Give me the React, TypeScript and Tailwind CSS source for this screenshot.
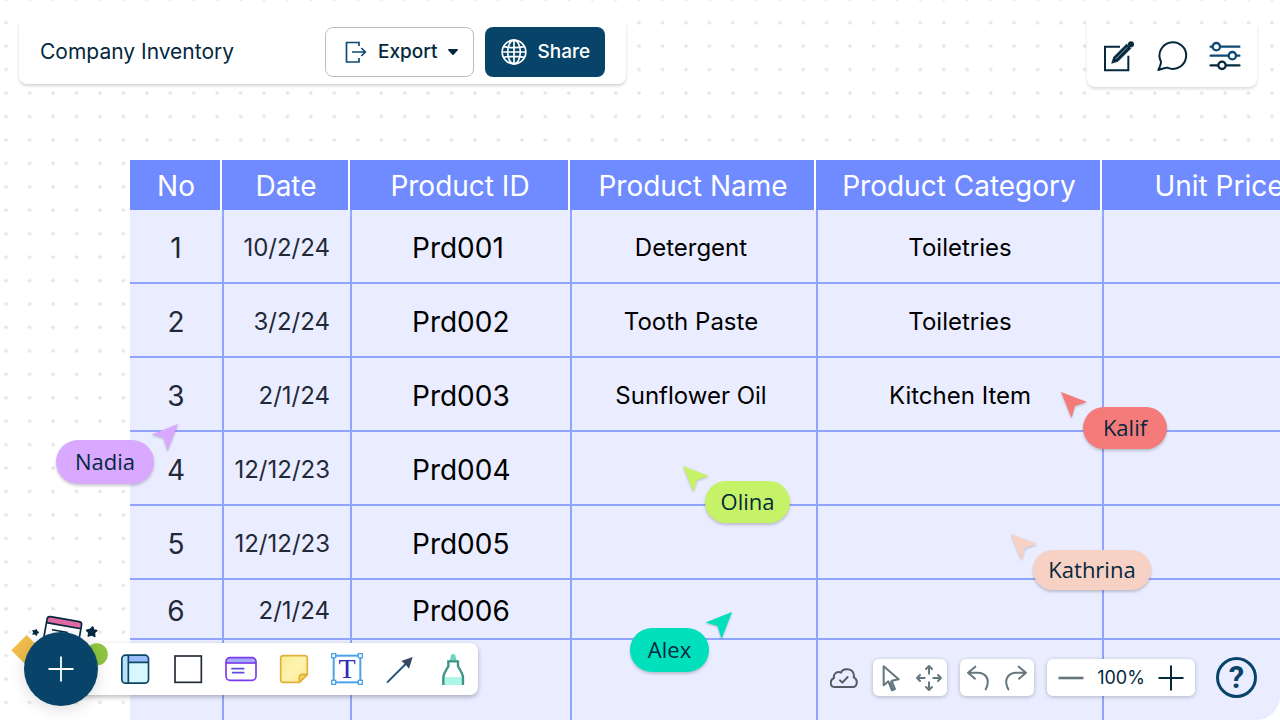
import type { ReactNode } from "react";

type Row = { no: string; date: string; id: string; name: string; category: string };

const rows: Row[] = [
  { no: "1", date: "10/2/24", id: "Prd001", name: "Detergent", category: "Toiletries" },
  { no: "2", date: "3/2/24", id: "Prd002", name: "Tooth Paste", category: "Toiletries" },
  { no: "3", date: "2/1/24", id: "Prd003", name: "Sunflower Oil", category: "Kitchen Item" },
  { no: "4", date: "12/12/23", id: "Prd004", name: "", category: "" },
  { no: "5", date: "12/12/23", id: "Prd005", name: "", category: "" },
  { no: "6", date: "2/1/24", id: "Prd006", name: "", category: "" },
  { no: "", date: "", id: "", name: "", category: "" },
];

const rowHeights = ["h-[74px]", "h-[74px]", "h-[74px]", "h-[74px]", "h-[74px]", "h-[60px]", "h-20"];

const headings = ["No", "Date", "Product ID", "Product Name", "Product Category", "Unit Price"];

function DotGrid() {
  return (
    <svg className="absolute inset-0 h-full w-full" aria-hidden="true">
      <defs>
        <pattern id="dots" x="-5.5" y="-12.5" width="23.44" height="23.44" patternUnits="userSpaceOnUse">
          <circle cx="11.72" cy="11.72" r="1.8" fill="#e4e4e4" />
        </pattern>
      </defs>
      <rect width="100%" height="100%" fill="url(#dots)" />
    </svg>
  );
}

function IconButton({ label, className, children }: { label: string; className: string; children: ReactNode }) {
  return (
    <button type="button" aria-label={label} className={className}>
      {children}
    </button>
  );
}

function Icon({ children }: { children: ReactNode }) {
  return (
    <svg viewBox="0 0 108 108" className="size-9" fill="none" aria-hidden="true">
      {children}
    </svg>
  );
}

function SmallIcon({ children }: { children: ReactNode }) {
  return (
    <svg
      viewBox="0 0 84 84"
      className="size-7"
      fill="none"
      stroke="#64777f"
      strokeWidth="6"
      strokeLinecap="round"
      strokeLinejoin="round"
      aria-hidden="true"
    >
      {children}
    </svg>
  );
}

function Header() {
  return (
    <header className="relative flex items-start justify-between pr-[23px] pl-[19px] pt-[21px]">
      <div className="flex items-center gap-[91px] rounded-b-lg bg-white px-[21px] pt-[6px] pb-[7px] shadow-[0_2px_3px_rgba(0,0,0,0.17)]">
        <h1 className="text-[21px] leading-7 text-[#04283d]">Company Inventory</h1>
        <div className="flex gap-[11px]">
          <button
            type="button"
            className="flex h-[50px] items-center rounded-lg border border-[#b4c0c6] pl-[18px] pr-[15px] text-[19px] font-medium text-[#04283d]"
          >
            <svg viewBox="0 0 72 72" className="mr-[10px] size-6" fill="none" stroke="#0c4a74" strokeWidth="5" aria-hidden="true">
              <path d="M45 18V7.500H7.500V66H45V54" />
              <path d="M24 36H64M52 24L64 36L52 48" />
            </svg>
            Export
            <svg viewBox="0 0 30 18" className="ml-[11px] h-[6px] w-[10px]" aria-hidden="true">
              <path d="M2 0H28Q31 1 29 4L17 17Q15 19 13 17L1 4Q-1 1 2 0Z" fill="#04283d" />
            </svg>
          </button>
          <button
            type="button"
            className="flex h-[50px] items-center gap-[10px] rounded-lg bg-[#084469] pl-4 pr-[15px] text-[19px] font-medium text-white"
          >
            <svg viewBox="0 0 78 78" className="size-[26px]" fill="none" stroke="#fff" strokeWidth="5" aria-hidden="true">
              <circle cx="39" cy="39" r="35.500" />
              <ellipse cx="39" cy="39" rx="19" ry="35.500" />
              <path d="M39 3V75M3 39H75M8 23Q39 29 70 23M8 55Q39 49 70 55" />
            </svg>
            Share
          </button>
        </div>
      </div>

      <div className="mt-[3px] flex gap-[17px] rounded-b-lg bg-white px-[14px] pt-[14px] pb-[13px] shadow-[0_2px_3px_rgba(0,0,0,0.14)]">
        <IconButton label="Edit" className="size-9">
          <Icon>
            <path d="M57 26.500H12V97H82V53" stroke="#04283d" strokeWidth="6" />
            <path d="M32 76L38 57L78 17L91 30L51 70Z" fill="#04283d" stroke="#04283d" strokeWidth="2" strokeLinejoin="round" />
            <path d="M44 63L79 28" stroke="#b9c6ce" strokeWidth="2.500" />
            <path d="M76 15L93 32" stroke="#fff" strokeWidth="2.500" />
            <circle cx="90" cy="18.500" r="9" fill="#04283d" />
          </Icon>
        </IconButton>
        <IconButton label="Comments" className="size-9">
          <Icon>
            <path
              d="M21 71A40 40 0 1 1 40 89C32 88 22 93 13 96C17 86 22 80 21 71Z"
              stroke="#04283d"
              strokeWidth="6"
              strokeLinejoin="round"
            />
          </Icon>
        </IconButton>
        <IconButton label="Settings" className="size-9">
          <Icon>
            <g strokeWidth="7" strokeLinecap="round" fill="#fff">
              <g stroke="#0c4a74">
                <path d="M11 26H97M11 53H97" />
                <circle cx="28" cy="26" r="11" />
                <circle cx="76" cy="53" r="11" />
              </g>
              <g stroke="#04283d">
                <path d="M11 82H97" />
                <circle cx="45" cy="82" r="11" />
              </g>
            </g>
          </Icon>
        </IconButton>
      </div>
    </header>
  );
}

function InventoryTable() {
  return (
    <section className="relative mt-[73px] overflow-hidden rounded-br-3xl pl-[130px]">
      <table className="w-[1206px] table-fixed border-separate border-spacing-0 bg-[#eaedff] text-center text-[24px] leading-8 text-black">
        <colgroup>
          <col className="w-[92px]" />
          <col className="w-[128px]" />
          <col className="w-[220px]" />
          <col className="w-[246px]" />
          <col className="w-[286px]" />
          <col />
        </colgroup>
        <thead>
          <tr className="h-[50px] bg-[#708bff]">
            {headings.map((heading) => (
              <th
                key={heading}
                scope="col"
                className="whitespace-nowrap border-r-2 border-white p-0 pt-px pl-[2px] text-[28px] font-normal text-white"
              >
                {heading}
              </th>
            ))}
          </tr>
        </thead>
        <tbody>
          {rows.map((row, i) => {
            const line = i === rows.length - 1 ? "border-[#8fa5ff]" : "border-b-2 border-[#8fa5ff]";
            return (
              <tr key={i} className={rowHeights[i]}>
                <td className={`${line} p-0 pt-1 text-[28px] text-[#1f2937]`}>{row.no}</td>
                <td className={`${line} border-l-2 p-0 pt-1 pr-5 text-right text-[#1f2937]`}>{row.date}</td>
                <td className={`${line} border-l-2 p-0 pt-1 pl-[60px] text-left text-[28px]`}>{row.id}</td>
                <td className={`${line} border-l-2 p-0 pt-1 pr-[6px]`}>{row.name}</td>
                <td className={`${line} border-l-2 p-0 pt-1`}>{row.category}</td>
                <td className={`${line} border-l-2 p-0`}></td>
              </tr>
            );
          })}
        </tbody>
      </table>
    </section>
  );
}

function Cursor({ place, color, flip }: { place: string; color: string; flip?: boolean }) {
  return (
    <svg viewBox="0 0 28 30" className={`absolute h-[30px] w-7 drop-shadow-[0_1px_1px_rgba(0,0,0,0.22)] ${place}`} aria-hidden="true">
      <path
        d={flip ? "M27 1L0.500 11.500L12.500 15L16.500 28Z" : "M1 1L27 11L15 15L11.500 27Z"}
        fill={color}
      />
    </svg>
  );
}

function Tag({ className, children }: { className: string; children: ReactNode }) {
  return (
    <span
      className={`absolute flex items-center justify-center rounded-full pb-[2px] font-['Open_Sans','Noto_Sans',sans-serif] text-[22px] leading-7 text-[#04283d] shadow-[0_2px_3px_rgba(0,0,0,0.2)] ${className}`}
    >
      {children}
    </span>
  );
}

function Collaborators() {
  return (
    <>
      <Cursor place="left-[151px] top-[423px]" color="#d9a8ff" flip />
      <Tag className="left-[56px] top-[440px] h-11 w-[98px] bg-[#d9a8ff]">Nadia</Tag>
      <Cursor place="left-[682px] top-[465px]" color="#c6f267" />
      <Tag className="left-[705px] top-[481px] h-[42px] w-[85px] bg-[#c6f267]">Olina</Tag>
      <Cursor place="left-[1060px] top-[391px]" color="#f57a7a" />
      <Tag className="left-[1083px] top-[407px] h-[42px] w-[84px] bg-[#f57a7a]">Kalif</Tag>
      <Cursor place="left-[1010px] top-[533px]" color="#f8d1c5" />
      <Tag className="left-[1033px] top-[550px] h-10 w-[118px] bg-[#f8d1c5]">Kathrina</Tag>
      <Cursor place="left-[705px] top-[611px]" color="#00e0bc" flip />
      <Tag className="left-[630px] top-[628px] h-11 w-[79px] bg-[#00e0bc]">Alex</Tag>
    </>
  );
}

function AddButton() {
  return (
    <div className="relative z-10">
      <svg viewBox="30 39 300 165" className="absolute -left-[14px] -top-[19px] h-[55px] w-[100px]" aria-hidden="true">
        <path d="M34 151L80 105L126 151L80 197Z" fill="#f0bd4b" />
        <circle cx="290" cy="163" r="33.500" fill="#8fc640" />
        <g transform="rotate(10 190 80)" strokeLinejoin="round">
          <rect x="138" y="57" width="105" height="90" rx="9" fill="#fff" />
          <path d="M138 77V66Q138 57 147 57H234Q243 57 243 66V77Z" fill="#e06aa6" />
          <rect x="138" y="57" width="105" height="90" rx="9" fill="none" stroke="#04283d" strokeWidth="5" />
          <path d="M138 77H243M158 95H206" stroke="#04283d" strokeWidth="5" />
        </g>
        <g fill="#04283d" stroke="#04283d" strokeLinejoin="round">
          <path strokeWidth="5" d="M278 81L281 90L290 92L283 98L284 109L275 104L265 108L267 98L260 91L270 89Z" />
          <path strokeWidth="4" d="M109 89L110 94L115 97L110 100L109 105L105 101L99 102L102 97L99 92L105 93Z" />
        </g>
      </svg>
      <button
        type="button"
        aria-label="Add"
        className="relative flex size-[74px] items-center justify-center rounded-full bg-[#084469] shadow-[0_3px_16px_rgba(0,0,0,0.14)]"
      >
        <svg viewBox="0 0 26 26" className="size-[26px]" stroke="#fff" strokeWidth="1.800" aria-hidden="true">
          <path d="M0.500 13H25.500M13 0.500V25.500" />
        </svg>
      </button>
    </div>
  );
}

function ShapeToolbar() {
  return (
    <nav
      aria-label="Shapes"
      className="-ml-9 flex h-[52px] items-center gap-[17px] rounded-lg bg-white pl-[55px] pr-[7px] shadow-[0_2px_5px_rgba(0,0,0,0.28)]"
    >
      <IconButton label="Table" className="size-9">
        <Icon>
          <rect x="14.500" y="12.500" width="80" height="84" rx="11" fill="#d6f7fd" />
          <path d="M34 12.500V96.500H25.500Q14.500 96.500 14.500 85.500V23.500Q14.500 12.500 25.500 12.500Z" fill="#b9e0f9" />
          <path d="M34 12.500H83.500Q94.500 12.500 94.500 23.500V34H34Z" fill="#98bdfa" />
          <rect x="14.500" y="12.500" width="80" height="84" rx="11" stroke="#0c4566" strokeWidth="5" />
          <path d="M34 12V97M34 34H94" stroke="#0c4566" strokeWidth="5" />
        </Icon>
      </IconButton>
      <IconButton label="Rectangle" className="size-9">
        <Icon>
          <rect x="15" y="15" width="79" height="79" stroke="#1f2937" strokeWidth="5" />
        </Icon>
      </IconButton>
      <IconButton label="Card" className="size-9">
        <Icon>
          <path d="M9 36V32Q9 20 21 20H87Q99 20 99 32V36Z" fill="#a3adf7" />
          <rect x="9" y="20" width="90" height="68" rx="12" stroke="#7c3aed" strokeWidth="5" />
          <path d="M9 36H99" stroke="#7c3aed" strokeWidth="5" />
          <path d="M27 53H62M29 65H62" stroke="#5b4be0" strokeWidth="5" strokeLinecap="round" />
        </Icon>
      </IconButton>
      <IconButton label="Sticky note" className="size-9">
        <Icon>
          <defs>
            <linearGradient id="note" x1="0" y1="0" x2="1" y2="1">
              <stop offset="0" stopColor="#fbec96" />
              <stop offset="0.5" stopColor="#fdf3ae" />
              <stop offset="1" stopColor="#fbe98c" />
            </linearGradient>
          </defs>
          <path
            d="M22 14H86Q94 14 94 22V70L70 94H22Q14 94 14 86V22Q14 14 22 14Z"
            fill="url(#note)"
            stroke="#e0b03c"
            strokeWidth="5"
            strokeLinejoin="round"
          />
          <path d="M94 70H80Q70 70 70 80V94Z" fill="#f6d35c" stroke="#e0b03c" strokeWidth="5" strokeLinejoin="round" />
        </Icon>
      </IconButton>
      <IconButton label="Text" className="size-9">
        <Icon>
          <rect x="14" y="14" width="80" height="80" stroke="#4ba3e8" strokeWidth="6" />
          <g fill="#fff" stroke="#4ba3e8" strokeWidth="4">
            <rect x="8" y="8" width="12" height="12" />
            <rect x="88" y="8" width="12" height="12" />
            <rect x="8" y="88" width="12" height="12" />
            <rect x="88" y="88" width="12" height="12" />
          </g>
          <text x="54" y="81" textAnchor="middle" fontFamily="Liberation Serif, serif" fontSize="84" fill="#2e2bb8">
            T
          </text>
        </Icon>
      </IconButton>
      <IconButton label="Connector" className="size-9">
        <Icon>
          <path d="M15 95L74 36" stroke="#1f5582" strokeWidth="6" />
          <path d="M92 18L58 30L70 40L81 53Z" fill="#34495e" />
        </Icon>
      </IconButton>
      <IconButton label="Highlighter" className="size-9">
        <Icon>
          <path d="M49 10H60L65 29H44Z" fill="#6fd3c3" />
          <path d="M24 78H86V102H24Z" fill="#aef5e5" />
          <path d="M25 102V78Q27 66 40 46V31H69V46Q82 66 84 78V102" stroke="#3f9384" strokeWidth="7" />
        </Icon>
      </IconButton>
    </nav>
  );
}

function ViewControls() {
  const panel = "flex h-[37px] items-center rounded-md bg-white shadow-[0_1px_4px_rgba(0,0,0,0.25)]";
  return (
    <div className="mb-[8px] flex items-center gap-[13px]">
      <svg
        viewBox="0 0 84 84"
        className="mr-0.5 size-7"
        fill="none"
        stroke="#555b62"
        strokeWidth="6"
        strokeLinecap="round"
        strokeLinejoin="round"
        role="img"
        aria-label="Saved"
      >
        <path d="M15 69C-1 69-2 48 12 42C9 28 22 21 33 26C38 12 66 12 71 30C73 35 71 38 71 40C85 46 83 69 68 69Z" />
        <path d="M30 49L37 56L53 39" />
      </svg>
      <div className={`${panel} gap-[10px] px-1`}>
        <IconButton label="Select" className="size-7">
          <SmallIcon>
            <path d="M20 7V64L34 52L45 79L54 75L44 50L65 46Z" />
            <path d="M40 55L49 76" />
          </SmallIcon>
        </IconButton>
        <IconButton label="Pan" className="size-7">
          <SmallIcon>
            <path d="M42 6V29M33 15L42 6L51 15M42 78V55M33 69L42 78L51 69M6 42H29M15 33L6 42L15 51M78 42H55M69 33L78 42L69 51" />
          </SmallIcon>
        </IconButton>
      </div>
      <div className={`${panel} gap-[10px] px-1`}>
        <IconButton label="Undo" className="size-7">
          <SmallIcon>
            <path d="M34 8L12 26L33 44M12 26H42C62 26 74 42 71 58C70 66 68 71 65 76" />
          </SmallIcon>
        </IconButton>
        <IconButton label="Redo" className="size-7">
          <SmallIcon>
            <path d="M50 8L72 26L51 44M72 26H42C22 26 10 42 13 58C14 66 16 71 19 76" />
          </SmallIcon>
        </IconButton>
      </div>
      <div className={`${panel} w-[148px] justify-between px-[11px]`}>
        <IconButton label="Zoom out" className="size-[26px]">
          <svg viewBox="0 0 26 26" className="size-[26px]" stroke="#64777f" strokeWidth="2.600" aria-hidden="true">
            <path d="M0.500 13H25.500" />
          </svg>
        </IconButton>
        <span className="text-[18px] text-[#04283d]">100%</span>
        <IconButton label="Zoom in" className="size-[26px]">
          <svg viewBox="0 0 26 26" className="size-[26px]" stroke="#04283d" strokeWidth="2" aria-hidden="true">
            <path d="M0.500 13H25.500M13 0.500V25.500" />
          </svg>
        </IconButton>
      </div>
      <button
        type="button"
        aria-label="Help"
        className="ml-2 flex size-[41px] items-center justify-center rounded-full border-[3px] border-[#084469] font-['Roboto',sans-serif] text-[31px] leading-8 font-bold text-[#084469]"
      >
        ?
      </button>
    </div>
  );
}

export default function App() {
  return (
    <div className="relative min-h-screen overflow-hidden bg-white font-['Inter',sans-serif]">
      <DotGrid />
      <Header />
      <main>
        <InventoryTable />
        <Collaborators />
      </main>
      <footer className="absolute inset-x-0 bottom-0 flex items-end justify-between pr-[23px] pb-[14px] pl-6">
        <div className="flex items-center">
          <AddButton />
          <ShapeToolbar />
        </div>
        <ViewControls />
      </footer>
    </div>
  );
}
